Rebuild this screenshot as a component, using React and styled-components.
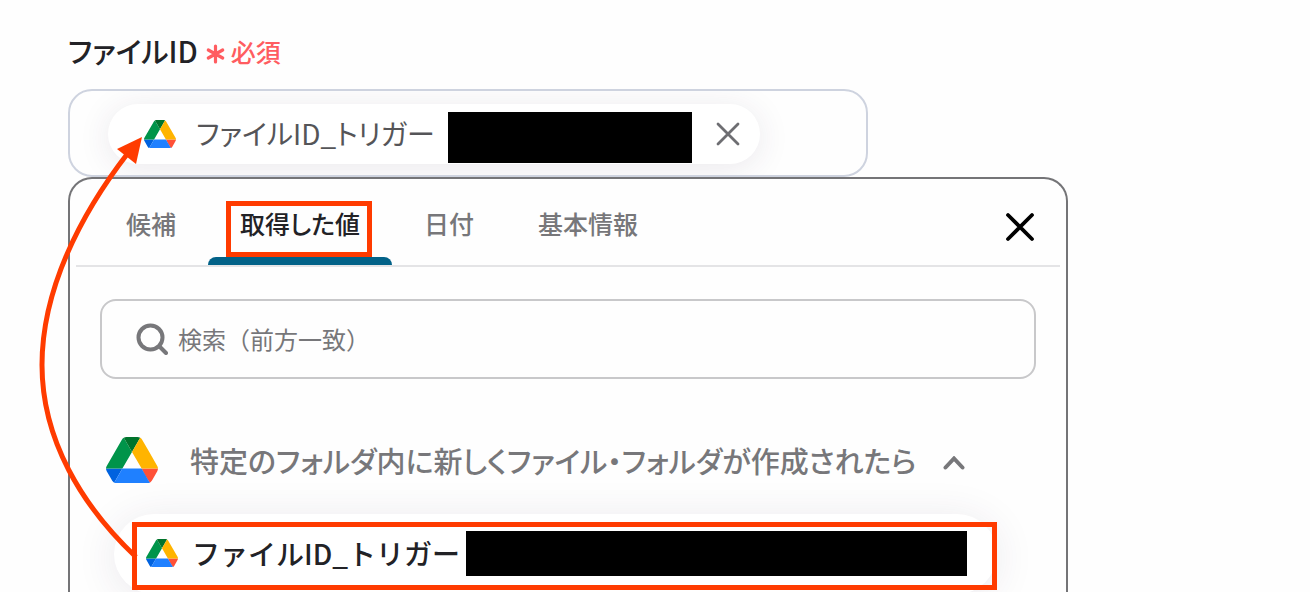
import { useState } from "react";
import styled, { createGlobalStyle } from "styled-components";

const GlobalStyle = createGlobalStyle`
  * {
    box-sizing: border-box;
  }

  body {
    margin: 0;
    background: #fefefe;
    color: #222226;
    font-family: "Noto Sans CJK JP", sans-serif;
    overflow: hidden;
  }

  button, input {
    font-family: inherit;
    color: inherit;
  }

  button {
    border: none;
    padding: 0;
    background: none;
    cursor: pointer;
  }
`;

const Page = styled.main`
  position: relative;
  display: flex;
  flex-direction: column;
  height: 100vh;
  padding: 30px 68px 0;
`;

const FieldLabel = styled.div`
  display: flex;
  align-items: center;
  gap: 8px;
  height: 40px;
  margin-bottom: 19px;
  font-size: 29px;
  font-weight: 500;
  font-feature-settings: "palt";
`;

const Required = styled.span`
  display: flex;
  align-items: center;
  gap: 6px;
  padding-top: 2px;
  font-size: 25px;
  color: #ff5c60;

  svg {
    margin-top: 6px;
  }
`;

const Field = styled.div`
  flex: none;
  max-width: 800px;
  height: 88px;
  padding: 13px 38px;
  border: 2px solid #ced3df;
  border-radius: 24px;
  overflow: hidden;
`;

const Chip = styled.div`
  display: flex;
  align-items: center;
  width: fit-content;
  height: 60px;
  padding: 0 16px 0 36px;
  border-radius: 30px;
  background: #fff;
  box-shadow: 0 4px 32px rgba(60, 40, 80, 0.1);
  color: #555558;
  font-size: 28px;
  line-height: 40px;
  font-feature-settings: "palt";
`;

const ChipText = styled.span`
  margin: 0 13px 2px 20px;
`;

const Redacted = styled.span`
  width: 244px;
  height: 51px;
  margin-top: 6px;
  background: #000;
`;

const RedactedWide = styled(Redacted)`
  flex: 1;
  height: 45px;
  margin-top: 0;
`;

const ChipClose = styled.button`
  display: flex;
  margin-left: 20px;
  color: #6e6e72;
`;

const Panel = styled.section`
  flex: 1;
  min-height: 0;
  max-width: 1000px;
  border: 2px solid #747477;
  border-bottom: none;
  border-radius: 24px 24px 0 0;
`;

const TabBar = styled.div`
  display: flex;
  align-items: center;
  height: 88px;
  margin: 0 6px;
  padding: 0 24px 0 18px;
  border-bottom: 2px solid #e4e4e6;
`;

const Tab = styled.button`
  position: relative;
  height: 100%;
  padding: 2px 32px 0;
  color: ${(props) => (props.$active ? "#222226" : "#77777a")};
  font-size: 25px;
  font-weight: 500;
  font-feature-settings: "palt";
  line-height: 40px;

  &::after {
    content: "";
    position: absolute;
    inset: auto 0 0;
    height: 8px;
    border-radius: 8px 8px 0 0;
    background: ${(props) => (props.$active ? "#026288" : "transparent")};
  }
`;

const Highlight = styled.i`
  position: absolute;
  z-index: 1;
  inset: ${(props) => props.$inset};
  border: 5px solid #ff3b00;
  pointer-events: none;
`;

const PanelClose = styled.button`
  display: flex;
  margin-left: auto;
  padding-top: 10px;
  color: #000;
`;

const Search = styled.label`
  display: flex;
  align-items: center;
  gap: 10px;
  height: 80px;
  margin: 32px 30px 0;
  padding: 0 34px;
  border: 2px solid #c8c8ca;
  border-radius: 16px;
`;

const SearchInput = styled.input`
  flex: 1;
  min-width: 0;
  padding: 0 0 2px;
  border: none;
  outline: none;
  background: none;
  font-size: 24px;

  &::placeholder {
    color: #77777a;
    opacity: 1;
  }
`;

const GroupHeader = styled.button`
  display: flex;
  align-items: center;
  height: 52px;
  margin: 55px 36px 0;
  color: #77777a;
  font-size: 29px;
  font-weight: 500;
  font-feature-settings: "palt";

  span {
    margin: 0 27px 0 32px;
  }

  svg:last-child {
    margin-top: 6px;
  }
`;

const Item = styled.button`
  position: relative;
  display: flex;
  align-items: center;
  width: calc(100% - 113px);
  height: 80px;
  margin: 28px 69px 0 44px;
  padding: 0 30px 2px 32px;
  border-radius: 40px;
  background: #fff;
  box-shadow: 0 4px 40px rgba(60, 40, 80, 0.1);
  font-size: 28px;
  font-weight: 500;
`;

const ItemText = styled.span`
  margin: 0 6px 0 14px;
`;

const Arrow = styled.svg`
  position: absolute;
  top: 0;
  left: 0;
  pointer-events: none;
`;

const DriveLogo = ({ size }) => (
  <svg width={size} viewBox="0 0 87.3 78" aria-hidden="true">
    <path d="m6.6 66.85 3.85 6.65c.8 1.4 1.95 2.5 3.3 3.3l13.75-23.8h-27.5c0 1.55.4 3.1 1.2 4.5z" fill="#0062df" />
    <path d="m43.65 25-13.75-23.8c-1.35.8-2.5 1.9-3.3 3.3l-25.4 44a9.06 9.06 0 0 0 -1.2 4.5h27.5z" fill="#00944a" />
    <path d="m73.55 76.8c1.35-.8 2.5-1.9 3.3-3.3l1.6-2.75 7.65-13.25c.8-1.4 1.2-2.95 1.2-4.5h-27.5l5.85 11.5z" fill="#ff5138" />
    <path d="m43.65 25 13.75-23.8c-1.35-.8-2.9-1.2-4.5-1.2h-18.5c-1.6 0-3.15.45-4.5 1.2z" fill="#00732c" />
    <path d="m59.8 53h-32.3l-13.75 23.8c1.35.8 2.9 1.2 4.5 1.2h50.8c1.6 0 3.15-.45 4.5-1.2z" fill="#1f80ff" />
    <path d="m73.4 26.5-12.7-22c-.8-1.4-1.95-2.5-3.3-3.3l-13.75 23.8 16.15 28h27.45c0-1.55-.4-3.1-1.2-4.5z" fill="#ffb400" />
  </svg>
);

const CrossIcon = ({ size, stroke }) => (
  <svg width="32" height="32" viewBox="0 0 32 32" fill="none" stroke="currentColor" strokeWidth={stroke} strokeLinecap="round">
    <path d={`M${16 - size} ${16 - size}L${16 + size} ${16 + size}M${16 + size} ${16 - size}L${16 - size} ${16 + size}`} />
  </svg>
);

const tabs = ["候補", "取得した値", "日付", "基本情報"];

function App() {
  const [active, setActive] = useState("取得した値");
  const [query, setQuery] = useState("");

  return (
    <>
      <GlobalStyle />
      <Page>
        <FieldLabel>
          ファイルID
          <Required>
            <svg width="19" height="20" viewBox="0 0 19 20" fill="none" stroke="currentColor" strokeWidth="3.2" strokeLinecap="round">
              <path d="M9.5 2v16M2.3 6l14.4 8M16.7 6L2.3 14" />
            </svg>
            必須
          </Required>
        </FieldLabel>
        <Field>
          <Chip>
            <DriveLogo size={32} />
            <ChipText>ファイルID_トリガー</ChipText>
            <Redacted />
            <ChipClose type="button" aria-label="削除">
              <CrossIcon size={10} stroke={2.8} />
            </ChipClose>
          </Chip>
        </Field>

        <Panel>
          <TabBar role="tablist">
            {tabs.map((tab) => (
              <Tab key={tab} type="button" role="tab" aria-selected={tab === active} $active={tab === active} onClick={() => setActive(tab)}>
                {tab}
                {tab === "取得した値" && <Highlight $inset="22px 20px 8px 18px" />}
              </Tab>
            ))}
            <PanelClose type="button" aria-label="閉じる">
              <CrossIcon size={12} stroke={3.8} />
            </PanelClose>
          </TabBar>

          <Search>
            <svg width="32" height="32" viewBox="0 0 32 32" fill="none" stroke="#77777a" strokeWidth="4" strokeLinecap="round">
              <circle cx="14.5" cy="14.5" r="12" />
              <path d="M23.5 23.5L30 30" />
            </svg>
            <SearchInput
              type="text"
              aria-label="検索"
              placeholder="検索（前方一致）"
              value={query}
              onChange={(e) => setQuery(e.target.value)}
            />
          </Search>

          <GroupHeader type="button" aria-expanded="true">
            <DriveLogo size={52} />
            <span>特定のフォルダ内に新しくファイル・フォルダが作成されたら</span>
            <svg width="22" height="14" viewBox="0 0 22 14" fill="none" stroke="currentColor" strokeWidth="4" strokeLinecap="round">
              <path d="M2.5 11.5L11 2.5l8.500 9" />
            </svg>
          </GroupHeader>

          <Item type="button">
            <DriveLogo size={32} />
            <ItemText>ファイルID_トリガー</ItemText>
            <RedactedWide />
            <Highlight $inset="8px 0 4px 18px" />
          </Item>
        </Panel>

        <Arrow width="160" height="592" viewBox="0 0 160 592" fill="none">
          <path d="M136 557C82 506 42 440 42 365C42 290 80 215 128 153" stroke="#ff3b00" strokeWidth="5" />
          <path d="M142 137L117 149L136 164Z" fill="#ff3b00" />
        </Arrow>
      </Page>
    </>
  );
}

export default App;
